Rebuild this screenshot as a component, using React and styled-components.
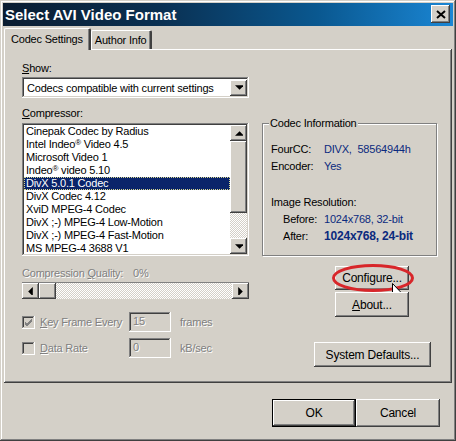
import styled, { createGlobalStyle } from "styled-components";

const GlobalStyle = createGlobalStyle`
  html, body {
    margin: 0;
    padding: 0;
    background: #d4d0c8;
  }
  body {
    font-family: "Liberation Sans", Arial, sans-serif;
    font-size: 11px;
    letter-spacing: -0.2px;
    color: #000;
  }
  * {
    box-sizing: border-box;
  }
`;

const raised = `
  box-shadow: inset -1px -1px #404040, inset 1px 1px #fff,
    inset -2px -2px #808080, inset 2px 2px #d4d0c8;
`;

const sunken = `
  box-shadow: inset -1px -1px #fff, inset 1px 1px #808080,
    inset -2px -2px #d4d0c8, inset 2px 2px #404040;
`;

const Window = styled.div`
  position: relative;
  width: 456px;
  height: 441px;
  padding: 3px;
  background: #d4d0c8;
  box-shadow: inset -1px -1px #404040, inset 1px 1px #d4d0c8,
    inset -2px -2px #808080, inset 2px 2px #fff;
  display: flex;
  flex-direction: column;
`;

const TitleBar = styled.div`
  height: 23px;
  padding: 0 3px 1px 2px;
  display: flex;
  align-items: center;
  justify-content: space-between;
  background: linear-gradient(90deg, #0b1d31 0%, #0a3052 35%, #0a5890 70%, #1a86d4 100%);
  color: #fff;
  font-weight: bold;
  font-size: 15px;
  letter-spacing: 0;
`;

const CloseButton = styled.div`
  width: 19px;
  height: 18px;
  background: #d4d0c8;
  ${raised}
  display: flex;
  align-items: center;
  justify-content: center;
`;

const Body = styled.div`
  padding: 1px 1px 0;
  display: flex;
  flex-direction: column;
`;

const TabStrip = styled.div`
  display: flex;
  align-items: flex-end;
  height: 22px;
  position: relative;
  z-index: 1;
`;

const Tab = styled.div`
  height: ${(p) => (p.$active ? "22px" : "19px")};
  margin-bottom: ${(p) => (p.$active ? "-1px" : "0")};
  padding: ${(p) => (p.$active ? "4px 6px 0 6px" : "3px 4px 0 3px")};
  background: #d4d0c8;
  border-top: 1px solid #fff;
  border-left: 1px solid #fff;
  border-right: 2px solid #404040;
  border-radius: 2px 2px 0 0;
  box-shadow: inset -1px 0 #808080;
  white-space: nowrap;
`;

const Panel = styled.div`
  height: 334px;
  padding: 13px 0 0 18px;
  background: #d4d0c8;
  box-shadow: inset -1px -1px #404040, inset 1px 1px #fff,
    inset -2px -2px #808080;
  display: grid;
  grid-template-columns: 227px 175px;
  column-gap: 13px;
  align-items: start;
`;

const Column = styled.div`
  display: flex;
  flex-direction: column;
  position: relative;
`;

const Label = styled.div`
  height: 13px;
  line-height: 13px;
  margin-top: ${(p) => p.$mt || 0}px;
  white-space: nowrap;
  ${(p) =>
    p.$disabled &&
    `color: #808080; text-shadow: 1px 1px 0 #fff;`}
`;

const QualityLabel = styled(Label)`
  display: grid;
  grid-template-columns: 111px auto;
`;

const Combo = styled.div`
  margin-top: 2px;
  height: 21px;
  padding: 2px 2px 2px 5px;
  background: #fff;
  ${sunken}
  display: flex;
  align-items: center;
  justify-content: space-between;
`;

const ArrowButton = styled.div`
  width: 17px;
  height: 16px;
  flex: none;
  background: #d4d0c8;
  ${raised}
  display: flex;
  align-items: center;
  justify-content: center;
`;

const List = styled.div`
  margin-top: 3px;
  height: 133px;
  padding: 2px;
  background: #fff;
  ${sunken}
  display: flex;
`;

const Items = styled.div`
  flex: 1;
  overflow: hidden;
`;

const Item = styled.div`
  height: 13px;
  line-height: 13px;
  padding-left: 2px;
  white-space: nowrap;
  overflow: hidden;
  ${(p) =>
    p.$selected &&
    `background: #0a246a; color: #fff; outline: 1px dotted #d8d890; outline-offset: -1px;`}
`;

const Sup = styled.span`
  font-size: 8px;
  line-height: 0;
  vertical-align: 3px;
`;

const VScroll = styled.div`
  width: 17px;
  display: flex;
  flex-direction: column;
`;

const Thumb = styled.div`
  height: ${(p) => p.$h}px;
  width: ${(p) => p.$w}px;
  flex: none;
  background: #d4d0c8;
  ${raised}
`;

const Track = styled.div`
  flex: 1;
  background: repeating-conic-gradient(#fff 0 25%, #d4d0c8 0 50%) 0 0 / 2px 2px;
`;

const HScroll = styled.div`
  margin-top: 3px;
  height: 16px;
  display: flex;
  box-shadow: 0 -1px #808080;
`;

const OptionRow = styled.div`
  margin-top: ${(p) => p.$mt}px;
  height: 20px;
  display: grid;
  grid-template-columns: 18px 89px 42px auto;
  align-items: center;
  color: #808080;
  text-shadow: 1px 1px 0 #fff;
`;

const CheckBox = styled.div`
  width: 13px;
  height: 13px;
  background: #d4d0c8;
  ${sunken}
  display: flex;
  align-items: center;
  justify-content: center;
`;

const Field = styled.div`
  height: 20px;
  padding: 3px 0 0 4px;
  background: #d4d0c8;
  ${sunken}
`;

const Unit = styled.span`
  padding-left: 9px;
`;

const Group = styled.div`
  position: relative;
  margin-top: 61px;
  height: 133px;
  padding: 17px 0 0 8px;
  border: 1px solid #808080;
  box-shadow: 1px 1px 0 #fff, inset 1px 1px 0 #fff;
`;

const GroupTitle = styled.span`
  position: absolute;
  top: -7px;
  left: 6px;
  padding: 0 2px 0 1px;
  line-height: 13px;
  background: #d4d0c8;
`;

const InfoRow = styled.div`
  height: 17px;
  line-height: 17px;
  display: grid;
  grid-template-columns: ${(p) => (p.$indent ? "12px 41px" : "53px")} auto;
  margin-top: ${(p) => p.$mt || 0}px;
  white-space: nowrap;
`;

const Value = styled.span`
  color: #0b2a7e;
  font-weight: ${(p) => (p.$bold ? "bold" : "normal")};
  font-size: ${(p) => (p.$bold ? "12px" : "11px")};
`;

const Button = styled.div`
  position: relative;
  width: ${(p) => p.$w}px;
  height: ${(p) => p.$h}px;
  margin-top: ${(p) => p.$mt || 0}px;
  margin-left: ${(p) => p.$ml || 0}px;
  background: #d4d0c8;
  ${(p) =>
    p.$default
      ? `box-shadow: inset 0 0 0 1px #000, inset -2px -2px #404040, inset 2px 2px #fff,
    inset -3px -3px #808080;`
      : raised}
  display: flex;
  align-items: center;
  justify-content: center;
  font-size: 12px;
`;

const Ellipse = styled.svg`
  position: absolute;
  left: -3px;
  top: -2px;
  overflow: visible;
`;

const Cursor = styled.svg`
  position: absolute;
  left: 57px;
  top: 17px;
`;

const Footer = styled.div`
  display: flex;
  justify-content: flex-end;
  padding: 16px 12px 0 0;
`;

const Tri = ({ dir }) => {
  const pts = {
    up: "0,4 4,0 8,4",
    down: "0,0 8,0 4,4",
    left: "4,0 4,8 0,4",
    right: "0,0 4,4 0,8",
  }[dir];
  const w = dir === "up" || dir === "down" ? 8 : 5;
  const h = dir === "up" || dir === "down" ? 5 : 8;
  return (
    <svg width={w} height={h} viewBox={`0 0 ${w - 1} ${h - 1}`}>
      <polygon points={pts} fill="#000" />
    </svg>
  );
};

const codecs = [
  "Cinepak Codec by Radius",
  <>
    Intel Indeo<Sup>®</Sup> Video 4.5
  </>,
  "Microsoft Video 1",
  <>
    Indeo<Sup>®</Sup> video 5.10
  </>,
  "DivX 5.0.1 Codec",
  "DivX Codec 4.12",
  "XviD MPEG-4 Codec",
  "DivX ;-) MPEG-4 Low-Motion",
  "DivX ;-) MPEG-4 Fast-Motion",
  "MS MPEG-4 3688 V1",
];

export default function App() {
  return (
    <>
      <GlobalStyle />
      <Window>
        <TitleBar>
          <span>Select AVI Video Format</span>
          <CloseButton>
            <svg width="10" height="9" viewBox="0 0 10 9">
              <path d="M1 1 L9 8 M9 1 L1 8" stroke="#000" strokeWidth="2" />
            </svg>
          </CloseButton>
        </TitleBar>
        <Body>
          <TabStrip>
            <Tab $active>Codec Settings</Tab>
            <Tab>Author Info</Tab>
          </TabStrip>
          <Panel>
            <Column>
              <Label>
                <u>S</u>how:
              </Label>
              <Combo>
                <span>Codecs compatible with current settings</span>
                <ArrowButton>
                  <Tri dir="down" />
                </ArrowButton>
              </Combo>
              <Label $mt={9}>
                <u>C</u>ompressor:
              </Label>
              <List>
                <Items>
                  {codecs.map((c, i) => (
                    <Item key={i} $selected={i === 4}>
                      {c}
                    </Item>
                  ))}
                </Items>
                <VScroll>
                  <ArrowButton>
                    <Tri dir="up" />
                  </ArrowButton>
                  <Thumb $h={72} $w={17} />
                  <Track />
                  <ArrowButton>
                    <Tri dir="down" />
                  </ArrowButton>
                </VScroll>
              </List>
              <QualityLabel $mt={11} $disabled>
                <span>
                  Compression <u>Q</u>uality:
                </span>
                <span>0%</span>
              </QualityLabel>
              <HScroll>
                <ArrowButton>
                  <Tri dir="left" />
                </ArrowButton>
                <Thumb $h={16} $w={17} />
                <Track />
                <ArrowButton>
                  <Tri dir="right" />
                </ArrowButton>
              </HScroll>
              <OptionRow $mt={13}>
                <CheckBox>
                  <svg width="9" height="9" viewBox="0 0 9 9">
                    <path d="M1 4 L3 6 L8 1 M1 5 L3 7 L8 2 M1 6 L3 8 L8 3" stroke="#808080" strokeWidth="1" fill="none" />
                  </svg>
                </CheckBox>
                <span>
                  <u>K</u>ey Frame Every
                </span>
                <Field>15</Field>
                <Unit>frames</Unit>
              </OptionRow>
              <OptionRow $mt={6}>
                <CheckBox />
                <span>
                  <u>D</u>ata Rate
                </span>
                <Field>0</Field>
                <Unit>kB/sec</Unit>
              </OptionRow>
            </Column>
            <Column>
              <Group>
                <GroupTitle>Codec Information</GroupTitle>
                <InfoRow>
                  <span>FourCC:</span>
                  <Value>DIVX, &nbsp;58564944h</Value>
                </InfoRow>
                <InfoRow>
                  <span>Encoder:</span>
                  <Value>Yes</Value>
                </InfoRow>
                <InfoRow $mt={19}>
                  <span>Image Resolution:</span>
                </InfoRow>
                <InfoRow $indent>
                  <span />
                  <span>Before:</span>
                  <Value>1024x768, 32-bit</Value>
                </InfoRow>
                <InfoRow $indent>
                  <span />
                  <span>After:</span>
                  <Value $bold>1024x768, 24-bit</Value>
                </InfoRow>
              </Group>
              <Button $w={74} $h={24} $mt={10} $ml={73}>
                Confi<u>g</u>ure...
                <Ellipse width="82" height="28" viewBox="0 0 82 28">
                  <ellipse cx="41" cy="14" rx="39.5" ry="12.5" fill="none" stroke="#d8262a" strokeWidth="3" />
                </Ellipse>
                <Cursor width="12" height="20" viewBox="0 0 12 20">
                  <path
                    d="M0.5 0.5 L0.5 16 L4 12.5 L6.5 18.5 L9 17.5 L6.5 11.5 L11 11.5 Z"
                    fill="#fff"
                    stroke="#000"
                    strokeWidth="1"
                  />
                </Cursor>
              </Button>
              <Button $w={74} $h={25} $mt={2} $ml={73}>
                <span>
                  <u>A</u>bout...
                </span>
              </Button>
              <Button $w={117} $h={25} $mt={25} $ml={52}>
                System Defaults...
              </Button>
            </Column>
          </Panel>
          <Footer>
            <Button $w={84} $h={28} $default>
              OK
            </Button>
            <Button $w={84} $h={28}>
              Cancel
            </Button>
          </Footer>
        </Body>
      </Window>
    </>
  );
}
